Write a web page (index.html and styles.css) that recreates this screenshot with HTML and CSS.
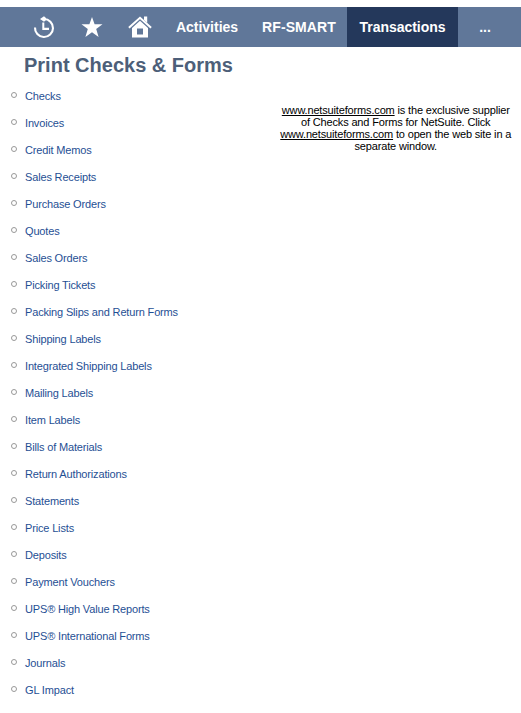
FILE: index.html
```html
<!DOCTYPE html>
<html lang="en">
<head>
<meta charset="utf-8">
<title>Print Checks &amp; Forms</title>
<link rel="stylesheet" href="styles.css">
</head>
<body>
<nav class="nav">
  <a class="nav-icon"><svg width="24" height="24" viewBox="0 0 24 24"><path d="M3 12.5A9 9 0 1 0 12 4" fill="none" stroke="#fff" stroke-width="2.1"/><path d="M8 4 12 1.3 14 3V5L12 6.8ZM10.3 7.5h2v5.3H17V15H10.3Z" fill="#fff"/></svg></a>
  <a class="nav-icon"><svg width="24" height="24" viewBox="0 0 24 24"><path d="M12 2 14.6 9.3H22.5L16.2 14 18.6 21.9 12 17.2 5.4 21.9 7.8 14 1.5 9.3H9.4Z" fill="#fff"/></svg></a>
  <a class="nav-icon"><svg width="24" height="24" viewBox="0 0 24 24"><path d="M.9 12.8 12 2.8 23.1 12.8" fill="none" stroke="#fff" stroke-width="2"/><path d="M16 1.5h3.2v6.3L16 5ZM12 5.8 20 13V22.5H4V13ZM9 13.6V19.4H15V13.6Z" fill="#fff" fill-rule="evenodd"/></svg></a>
  <a class="nav-item activities">Activities</a>
  <a class="nav-item rf">RF-SMART</a>
  <a class="nav-item current">Transactions</a>
  <a class="nav-item more">...</a>
</nav>
<h1 class="title">Print Checks &amp; Forms</h1>
<main class="content">
  <ul class="links">
    <li><a>Checks</a></li>
    <li><a>Invoices</a></li>
    <li><a>Credit Memos</a></li>
    <li><a>Sales Receipts</a></li>
    <li><a>Purchase Orders</a></li>
    <li><a>Quotes</a></li>
    <li><a>Sales Orders</a></li>
    <li><a>Picking Tickets</a></li>
    <li><a>Packing Slips and Return Forms</a></li>
    <li><a>Shipping Labels</a></li>
    <li><a>Integrated Shipping Labels</a></li>
    <li><a>Mailing Labels</a></li>
    <li><a>Item Labels</a></li>
    <li><a>Bills of Materials</a></li>
    <li><a>Return Authorizations</a></li>
    <li><a>Statements</a></li>
    <li><a>Price Lists</a></li>
    <li><a>Deposits</a></li>
    <li><a>Payment Vouchers</a></li>
    <li><a>UPS® High Value Reports</a></li>
    <li><a>UPS® International Forms</a></li>
    <li><a>Journals</a></li>
    <li><a>GL Impact</a></li>
  </ul>
  <p class="note"><a>www.netsuiteforms.com</a> is the exclusive supplier<br>of Checks and Forms for NetSuite. Click<br><a>www.netsuiteforms.com</a> to open the web site in a<br>separate window.</p>
</main>
</body>
</html>
```

FILE: styles.css
```css
body {
  margin: 0;
  padding-top: 7px;
  background: #fff;
  font-family: "Liberation Sans", Arial, sans-serif;
  font-size: 11px;
}
.nav {
  display: flex;
  height: 40px;
  padding-left: 20px;
  background: #607799;
  color: #fff;
}
.nav-icon {
  display: flex;
  width: 48px;
  align-items: center;
  justify-content: center;
}
.nav-item {
  box-sizing: border-box;
  flex: none;
  font-size: 14px;
  font-weight: bold;
  line-height: 40px;
  text-align: center;
  white-space: nowrap;
}
.activities { width: 86px; }
.rf { width: 97px; padding-left: 1px; letter-spacing: 0.1px; }
.current { width: 111px; background: #24385b; letter-spacing: -0.05px; }
.more { width: 54px; }
.title {
  margin: 4px 0 0 24px;
  color: #4d5f79;
  font-size: 20px;
  line-height: 28px;
}
.content {
  display: flex;
  align-items: flex-start;
  letter-spacing: -0.16px;
}
.links {
  width: 270px;
  margin: 4px 0 0;
  padding: 0;
  list-style: none;
}
.links li {
  display: flex;
  height: 27px;
  padding-left: 11px;
  line-height: 27px;
  color: #1f4f94;
}
.links li::before {
  content: "";
  box-sizing: border-box;
  width: 6px;
  height: 6px;
  margin: 9px 8px 0 0;
  border: 1.4px solid #999;
  border-radius: 50%;
}
.note {
  width: 251px;
  margin: 25px 0 0 1px;
  line-height: 12px;
  text-align: center;
  white-space: nowrap;
}
.note a { text-decoration: underline; }
```
